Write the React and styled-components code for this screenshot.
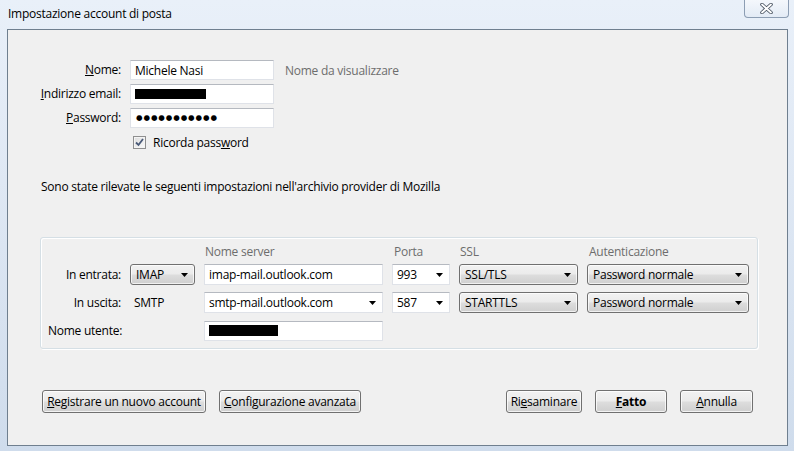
import React from "react";
import styled, { createGlobalStyle } from "styled-components";

const Global = createGlobalStyle`
  html, body { margin: 0; padding: 0; }
  body { font-family: "Segoe UI", "Open Sans", "Noto Sans", sans-serif; font-size: 12px; color: #000; }
  #root { width: 794px; height: 451px; overflow: hidden; }
`;

const Frame = styled.div`
  width: 794px;
  height: 451px;
  box-sizing: border-box;
  display: flex;
  flex-direction: column;
  padding: 0 6px 5px 7px;
  background: linear-gradient(180deg, #e9f0f9 0%, #dfe8f4 40%, #cfdcec 100%);
`;

const TitleBar = styled.div`
  height: 29px;
  display: flex;
  align-items: flex-start;
  justify-content: space-between;
`;

const Title = styled.div`
  margin-top: 6px;
  margin-left: 1px;
  font-size: 12px;
  line-height: 16px;
  color: #000;
  letter-spacing: -0.25px;
`;

const CloseBtn = styled.div`
  width: 45px;
  height: 19px;
  margin-top: -1px;
  margin-right: -1px;
  box-sizing: border-box;
  border: 1px solid #8c9db3;
  border-top: none;
  border-radius: 0 0 4px 4px;
  background: linear-gradient(180deg, rgba(255,255,255,0.55), rgba(225,233,244,0.7));
  display: flex;
  align-items: center;
  justify-content: center;
`;

const Panel = styled.div`
  flex: 1;
  border: 1px solid #6f7f8f;
  background: #f0f0f0;
  display: flex;
  flex-direction: column;
`;

const TopForm = styled.div`
  display: grid;
  grid-template-columns: 113px 144px auto;
  column-gap: 9px;
  row-gap: 4px;
  margin-top: 30px;
  align-items: center;
`;

const Label = styled.label`
  text-align: right;
  line-height: 20px;
  letter-spacing: -0.25px;
  white-space: nowrap;
`;

const TextBox = styled.div`
  height: 20px;
  box-sizing: border-box;
  background: #fff;
  border: 1px solid #dfe2e8;
  border-top-color: #b5b9c0;
  display: flex;
  align-items: center;
  padding-left: 4px;
  letter-spacing: -0.25px;
  white-space: nowrap;
  overflow: hidden;
`;

const Hint = styled.span`
  color: #6d6d6d;
  margin-left: 2px;
  letter-spacing: -0.25px;
`;

const Redact = styled.span`
  display: inline-block;
  background: #000;
  width: ${p => p.$w}px;
  height: ${p => p.$h}px;
`;

const Dots = styled.span`
  font-family: "DejaVu Sans", sans-serif;
  font-size: 7.5px;
  letter-spacing: 0.9px;
  line-height: 20px;
  padding-left: 1px;
`;

const CheckRow = styled.div`
  grid-column: 2 / 4;
  display: flex;
  align-items: center;
  height: 20px;
  gap: 7px;
  padding-left: 3px;
  letter-spacing: -0.25px;
`;

const CheckBox = styled.span`
  width: 13px;
  height: 13px;
  box-sizing: border-box;
  border: 1px solid #8f8f8f;
  background: linear-gradient(135deg, #dcdcdc, #fbfbfb);
  box-shadow: inset 0 0 0 1px #f4f4f4;
  display: flex;
  align-items: center;
  justify-content: center;
`;

const Info = styled.div`
  margin-top: 27px;
  margin-left: 33px;
  line-height: 16px;
  letter-spacing: -0.25px;
`;

const Group = styled.div`
  margin-top: 42px;
  margin-left: 32px;
  width: 718px;
  box-sizing: border-box;
  border: 1px solid #d5dfe5;
  border-radius: 3px;
  box-shadow: inset 1px 1px 0 #fff, 1px 1px 0 #fff;
  display: grid;
  grid-template-columns: 80px 65px 179px 58px 119px 162px;
  column-gap: 9px;
  row-gap: 7px;
  grid-template-rows: 16px 21px 21px 21px;
  padding: 3px 0 7px 0;
  align-items: center;
`;

const Head = styled.div`
  grid-column: ${p => p.$col};
  color: #6d6d6d;
  padding-left: ${p => p.$pl || 1}px;
  letter-spacing: -0.25px;
  margin-bottom: -5px;
`;

const RowLabel = styled.div`
  text-align: right;
  letter-spacing: -0.25px;
  white-space: nowrap;
`;

const WideLabel = styled.div`
  grid-column: 1 / 3;
  padding-left: 7px;
  letter-spacing: -0.25px;
`;

const PlainText = styled.div`
  padding-left: 4px;
  letter-spacing: -0.25px;
`;

const Select = styled.div`
  height: 21px;
  box-sizing: border-box;
  border: 1px solid #707070;
  border-radius: 3px;
  background: linear-gradient(180deg, #f2f2f2 0%, #ebebeb 48%, #dddddd 52%, #cfcfcf 100%);
  box-shadow: inset 0 0 0 1px rgba(255,255,255,0.7);
  display: flex;
  align-items: center;
  justify-content: space-between;
  padding: 0 6px 0 5px;
  letter-spacing: -0.25px;
  white-space: nowrap;
`;

const Combo = styled.div`
  height: 21px;
  box-sizing: border-box;
  background: #fff;
  border: 1px solid #dfe2e8;
  border-top-color: #b5b9c0;
  display: flex;
  align-items: center;
  justify-content: space-between;
  padding: 0 6px 0 4px;
  letter-spacing: -0.25px;
  white-space: nowrap;
`;

const ButtonRow = styled.div`
  margin-top: 41px;
  display: flex;
  padding: 0 34px;
  align-items: center;
`;

const BtnGroup = styled.div`
  display: flex;
  gap: 13px;
`;

const Spacer = styled.div`
  flex: 1;
`;

const Button = styled.div`
  width: ${p => p.$w}px;
  height: 23px;
  box-sizing: border-box;
  border: 1px solid #707070;
  border-radius: 3px;
  background: linear-gradient(180deg, #f2f2f2 0%, #ebebeb 48%, #dddddd 52%, #cfcfcf 100%);
  box-shadow: inset 0 0 0 1px rgba(255,255,255,0.75);
  display: flex;
  align-items: center;
  justify-content: center;
  font-weight: ${p => (p.$bold ? 700 : 400)};
  letter-spacing: -0.25px;
  white-space: nowrap;
`;

const Arrow = () => (
  <svg width="7" height="4" viewBox="0 0 7 4">
    <path d="M0 0H7L3.5 4Z" fill="#000" />
  </svg>
);

const Check = () => (
  <svg width="9" height="9" viewBox="0 0 9 9">
    <path d="M1 4.5L3.5 7L8 1" fill="none" stroke="#4a5a78" strokeWidth="1.8" />
  </svg>
);

export default function App() {
  return (
    <>
      <Global />
      <Frame>
        <TitleBar>
          <Title>Impostazione account di posta</Title>
          <CloseBtn>
            <svg width="13" height="11" viewBox="0 0 13 11">
              <path d="M2 1.5L11 9.5M11 1.5L2 9.5" stroke="#4b5563" strokeWidth="3.6" strokeLinecap="round" />
              <path d="M2 1.5L11 9.5M11 1.5L2 9.5" stroke="#ffffff" strokeWidth="1.8" strokeLinecap="round" />
            </svg>
          </CloseBtn>
        </TitleBar>
        <Panel>
          <TopForm>
            <Label><u>N</u>ome:</Label>
            <TextBox>Michele Nasi</TextBox>
            <Hint>Nome da visualizzare</Hint>

            <Label><u>I</u>ndirizzo email:</Label>
            <TextBox><Redact $w={71} $h={10} /></TextBox>
            <span />

            <Label><u>P</u>assword:</Label>
            <TextBox><Dots>●●●●●●●●●●●</Dots></TextBox>
            <span />

            <span />
            <CheckRow>
              <CheckBox><Check /></CheckBox>
              <span>Ricorda pass<u>w</u>ord</span>
            </CheckRow>
          </TopForm>

          <Info>Sono state rilevate le seguenti impostazioni nell'archivio provider di Mozilla</Info>

          <Group>
            <Head $col={3}>Nome server</Head>
            <Head $col={4} $pl={2}>Porta</Head>
            <Head $col={5}>SSL</Head>
            <Head $col={6} $pl={2}>Autenticazione</Head>

            <RowLabel>In entrata:</RowLabel>
            <Select>IMAP<Arrow /></Select>
            <Combo>imap-mail.outlook.com</Combo>
            <Combo>993<Arrow /></Combo>
            <Select>SSL/TLS<Arrow /></Select>
            <Select>Password normale<Arrow /></Select>

            <RowLabel>In uscita:</RowLabel>
            <PlainText>SMTP</PlainText>
            <Combo>smtp-mail.outlook.com<Arrow /></Combo>
            <Combo>587<Arrow /></Combo>
            <Select>STARTTLS<Arrow /></Select>
            <Select>Password normale<Arrow /></Select>

            <WideLabel>Nome utente:</WideLabel>
            <TextBox><Redact $w={69} $h={11} /></TextBox>
          </Group>

          <ButtonRow>
            <BtnGroup>
              <Button $w={164}><span><u>R</u>egistrare un nuovo account</span></Button>
              <Button $w={142}><span><u>C</u>onfigurazione avanzata</span></Button>
            </BtnGroup>
            <Spacer />
            <BtnGroup>
              <Button $w={76}><span>Ri<u>e</u>saminare</span></Button>
              <Button $w={72} $bold><span><u>F</u>atto</span></Button>
              <Button $w={73}><span><u>A</u>nnulla</span></Button>
            </BtnGroup>
          </ButtonRow>
        </Panel>
      </Frame>
    </>
  );
}
